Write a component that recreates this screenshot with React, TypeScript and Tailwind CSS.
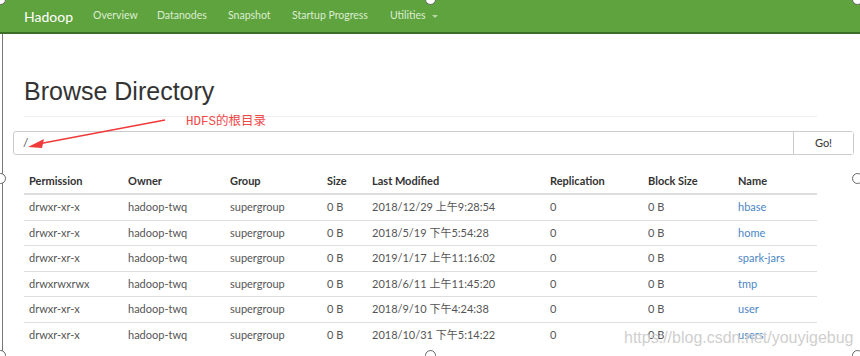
import React from 'react';

interface Entry {
  perm: string;
  modified: string;
  name: string;
}

const entries: Entry[] = [
  { perm: 'drwxr-xr-x', modified: '2018/12/29 上午9:28:54', name: 'hbase' },
  { perm: 'drwxr-xr-x', modified: '2018/5/19 下午5:54:28', name: 'home' },
  { perm: 'drwxr-xr-x', modified: '2019/1/17 上午11:16:02', name: 'spark-jars' },
  { perm: 'drwxrwxrwx', modified: '2018/6/11 上午11:45:20', name: 'tmp' },
  { perm: 'drwxr-xr-x', modified: '2018/9/10 下午4:24:38', name: 'user' },
  { perm: 'drwxr-xr-x', modified: '2018/10/31 下午5:14:22', name: 'users' },
];

const cols = 'grid grid-cols-[99px_102px_97px_45px_178px_98px_90px_1fr] px-[5px]';

const Handle = ({ className }: { className: string }) => (
  <div className={`absolute w-[11px] h-[11px] rounded-full bg-white border border-[#666] ${className}`} />
);

export default function App() {
  return (
    <div
      className="relative w-[860px] h-[356px] overflow-hidden bg-white text-[#333]"
      style={{ fontFamily: 'Lato, "Noto Sans CJK SC", sans-serif' }}
    >
      {/* Navbar */}
      <nav className="h-[34px] bg-[#5fa33e] border-b-2 border-[#3d6e26] flex items-center pl-[24px] text-[10.5px] text-[#dcedd2]">
        <span className="text-[14px] text-white w-[69px]">Hadoop</span>
        <span className="w-[64px]">Overview</span>
        <span className="w-[71px]">Datanodes</span>
        <span className="w-[64px]">Snapshot</span>
        <span className="w-[98px]">Startup Progress</span>
        <span className="flex items-center gap-[6px]">
          Utilities
          <span className="w-0 h-0 border-l-[3px] border-r-[3px] border-t-[3px] border-l-transparent border-r-transparent border-t-[#b8d8a8]" />
        </span>
      </nav>

      {/* Left frame line */}
      <div className="absolute left-[2px] top-[34px] bottom-0 w-px bg-[#777]" />

      <div className="pt-[42px]">
        <h1
          className="pl-[24px] text-[25px] leading-[30px] text-[#333]"
          style={{ fontFamily: '"Liberation Sans", Arial, sans-serif' }}
        >
          Browse Directory
        </h1>
        <div className="ml-[24px] w-[793px] mt-[10px] h-px bg-[#eee]" />

        {/* Path input */}
        <div className="ml-[13px] mt-[14px] w-[841px] h-[24px] flex border border-[#ccc] rounded-[3px] text-[11px]">
          <div className="flex-1 flex items-center pl-[9px] text-[#555] text-[12px]">/</div>
          <div className="w-[60px] border-l border-[#ccc] bg-white flex items-center justify-center text-[#333]">Go!</div>
        </div>

        {/* Table */}
        <div className="ml-[24px] w-[793px] mt-[14px] text-[11px]">
          <div className={`${cols} h-[26px] items-center font-bold border-b-2 border-[#ddd]`}>
            <span>Permission</span>
            <span>Owner</span>
            <span>Group</span>
            <span>Size</span>
            <span>Last Modified</span>
            <span>Replication</span>
            <span>Block Size</span>
            <span>Name</span>
          </div>
          {entries.map((e, i) => (
            <div
              key={e.name}
              className={`${cols} h-[25.5px] items-center text-[#555] ${i < entries.length - 1 ? 'border-b border-[#ddd]' : ''}`}
            >
              <span>{e.perm}</span>
              <span>hadoop-twq</span>
              <span>supergroup</span>
              <span>0 B</span>
              <span>{e.modified}</span>
              <span>0</span>
              <span>0 B</span>
              <span className="text-[#4a86c5]">{e.name}</span>
            </div>
          ))}
        </div>
      </div>

      {/* Annotation */}
      <svg className="absolute left-0 top-0" width="860" height="356">
        <line x1="165" y1="120" x2="38" y2="144" stroke="#f03a3a" strokeWidth="1.5" />
        <polygon points="28,147 44,139 42,148" fill="#f03a3a" />
      </svg>
      <span
        className="absolute left-[186px] top-[113px] text-[12.5px] text-[#f04848]"
        style={{ fontFamily: '"Liberation Mono", "Noto Sans CJK SC", monospace' }}
      >
        HDFS的根目录
      </span>

      {/* Watermark */}
      <span
        className="absolute left-[624px] top-[326px] text-[16px] text-[#cfcfcf]"
        style={{ fontFamily: '"Liberation Sans", Arial, sans-serif' }}
      >
        https://blog.csdn.net/youyigebug
      </span>

      {/* Resize handles */}
      <Handle className="left-[-5px] top-[-6px]" />
      <Handle className="left-[425px] top-[-6px]" />
      <Handle className="left-[852px] top-[-6px]" />
      <Handle className="left-[-5px] top-[173px]" />
      <Handle className="left-[852px] top-[173px]" />
      <Handle className="left-[-5px] top-[350px]" />
      <Handle className="left-[425px] top-[350px]" />
      <Handle className="left-[852px] top-[350px]" />
    </div>
  );
}
